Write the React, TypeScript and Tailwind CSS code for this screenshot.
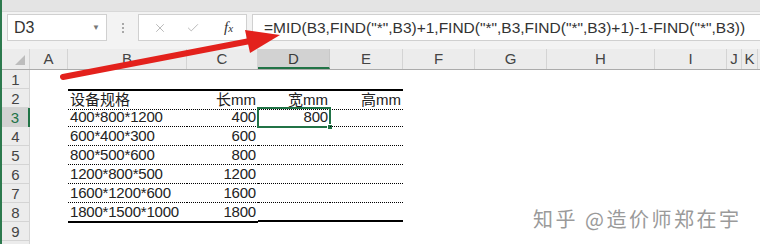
import { X, Check } from "lucide-react";

const cols = [
  { k: "A", w: "w-[38px]" },
  { k: "B", w: "w-[119px]" },
  { k: "C", w: "w-[71px]" },
  { k: "D", w: "w-[72px]" },
  { k: "E", w: "w-[73px]" },
  { k: "F", w: "w-[72px]" },
  { k: "G", w: "w-[72px]" },
  { k: "H", w: "w-[108px]" },
  { k: "I", w: "w-[72px]" },
  { k: "J", w: "w-[15px]" },
  { k: "K", w: "w-[16px]" },
];

const data: Record<number, string[]> = {
  2: ["设备规格", "长mm", "宽mm", "高mm"],
  3: ["400*800*1200", "400", "800", ""],
  4: ["600*400*300", "600", "", ""],
  5: ["800*500*600", "800", "", ""],
  6: ["1200*800*500", "1200", "", ""],
  7: ["1600*1200*600", "1600", "", ""],
  8: ["1800*1500*1000", "1800", "", ""],
};

const formula =
  '=MID(B3,FIND("*",B3)+1,FIND("*",B3,FIND("*",B3)+1)-1-FIND("*",B3))';

function SheetRow({ row }: { row: number }) {
  const values = data[row];
  const active = row === 3;
  return (
    <div className="flex h-[19px]">
      <div
        className={
          active
            ? "w-[28px] shrink-0 border-r-2 border-[#217346] bg-[#d2d2d2] text-center text-[15px] leading-[19px] text-[#217346]"
            : "w-[28px] shrink-0 border-r border-b border-[#d4d4d4] bg-[#ececec] text-center text-[15px] leading-[19px] text-[#444]"
        }
      >
        {row < 10 ? row : ""}
      </div>
      {cols.map((c, i) => {
        const inTable = values && i >= 1 && i <= 4;
        if (!inTable) return <div key={c.k} className={`${c.w} shrink-0`} />;
        const text = values[i - 1];
        const border =
          row === 8 ? "border-b-2 border-b-black" : "border-b border-b-black border-dotted";
        const align = i === 1 ? "justify-start pl-[2px]" : "justify-end pr-[2px]";
        return (
          <div
            key={c.k}
            className={`${c.w} relative flex shrink-0 flex-col ${row === 2 ? "border-t-2 border-t-black" : ""}`}
          >
            <div
              className={`flex flex-1 items-end text-[15px] leading-[18px] text-[#222] ${border} ${align}`}
            >
              <span className={row === 2 ? "" : "tracking-[-0.2px]"}>{text}</span>
            </div>
            {row === 3 && i === 3 && (
              <div className="absolute -top-px -right-px -bottom-px -left-px border-2 border-[#217346]">
                <div className="absolute -right-[4px] -bottom-[4px] h-[6px] w-[6px] border border-white bg-[#217346]" />
              </div>
            )}
          </div>
        );
      })}
    </div>
  );
}

export default function App() {
  return (
    <div
      className="relative h-[244px] w-[760px] overflow-hidden border-l-2 border-[#2d7a4e] bg-white"
      style={{ fontFamily: '"Liberation Sans", "Noto Sans CJK SC", sans-serif' }}
    >
      <div className="h-[12px] border-b border-[#d8d8d8] bg-[#e4e4e4]" />

      <div className="flex h-[36px] items-start bg-[#f3f3f3] pt-[2px]">
        <div className="ml-[5px] flex h-[27px] w-[100px] items-center justify-between border border-[#d0d0d0] bg-white pr-[6px] pl-[6px]">
          <span className="text-[16px] text-[#333]">D3</span>
          <span className="text-[8px] text-[#777]">▼</span>
        </div>
        <div className="flex h-[27px] w-[31px] flex-col items-center justify-center gap-[2px]">
          <span className="h-[2px] w-[2px] bg-[#a8a8a8]" />
          <span className="h-[2px] w-[2px] bg-[#a8a8a8]" />
          <span className="h-[2px] w-[2px] bg-[#a8a8a8]" />
        </div>
        <div className="flex h-[27px] w-[109px] items-center border border-[#d0d0d0] bg-white pl-[14px]">
          <X size={14} strokeWidth={1.5} className="text-[#b0b0b0]" />
          <Check size={14} strokeWidth={1.5} className="ml-[19px] text-[#b0b0b0]" />
          <span
            className="ml-[24px] text-[15px] text-[#333] italic"
            style={{ fontFamily: '"Liberation Serif", serif' }}
          >
            f<span className="text-[11px]">x</span>
          </span>
        </div>
        <div className="ml-[5px] flex h-[27px] flex-1 items-center border-y border-l border-[#d0d0d0] bg-white pl-[11px] text-[15.5px] whitespace-nowrap text-[#333]">
          {formula}
        </div>
      </div>

      <div className="h-[1px] bg-[#f3f3f3]" />

      <div className="flex h-[21px] border-b border-[#ababab] bg-[#ececec]">
        <div className="relative w-[28px] shrink-0 border-r border-[#d4d4d4]">
          <svg className="absolute right-[4px] bottom-[4px]" width="10" height="10" viewBox="0 0 10 10">
            <polygon points="10,0 10,10 0,10" fill="#bdbdbd" />
          </svg>
        </div>
        {cols.map((c) => (
          <div
            key={c.k}
            className={
              c.k === "D"
                ? `${c.w} shrink-0 border-r border-b-2 border-r-[#c8c8c8] border-b-[#217346] bg-[#d2d2d2] text-center text-[15px] leading-[20px] text-[#3a3a3a]`
                : `${c.w} shrink-0 border-r border-[#d4d4d4] text-center text-[15px] leading-[20px] text-[#444]`
            }
          >
            {c.k}
          </div>
        ))}
      </div>

      {[1, 2, 3, 4, 5, 6, 7, 8, 9, 10].map((r) => (
        <SheetRow key={r} row={r} />
      ))}

      <div
        className="absolute top-[204px] left-[531px] text-[20px] tracking-[2.5px] text-[#9a9a9a]"
        style={{ fontFamily: '"Noto Sans CJK SC", sans-serif', textShadow: "0 0 2px #fff" }}
      >
        知乎 @造价师郑在宇
      </div>

      <svg className="pointer-events-none absolute top-0 -left-[2px]" width="760" height="244">
        <line x1="63" y1="77" x2="250" y2="41" stroke="#e3211c" strokeWidth="6" strokeLinecap="round" />
        <polygon points="280,35 245,30 250,53" fill="#e3211c" />
      </svg>
    </div>
  );
}
